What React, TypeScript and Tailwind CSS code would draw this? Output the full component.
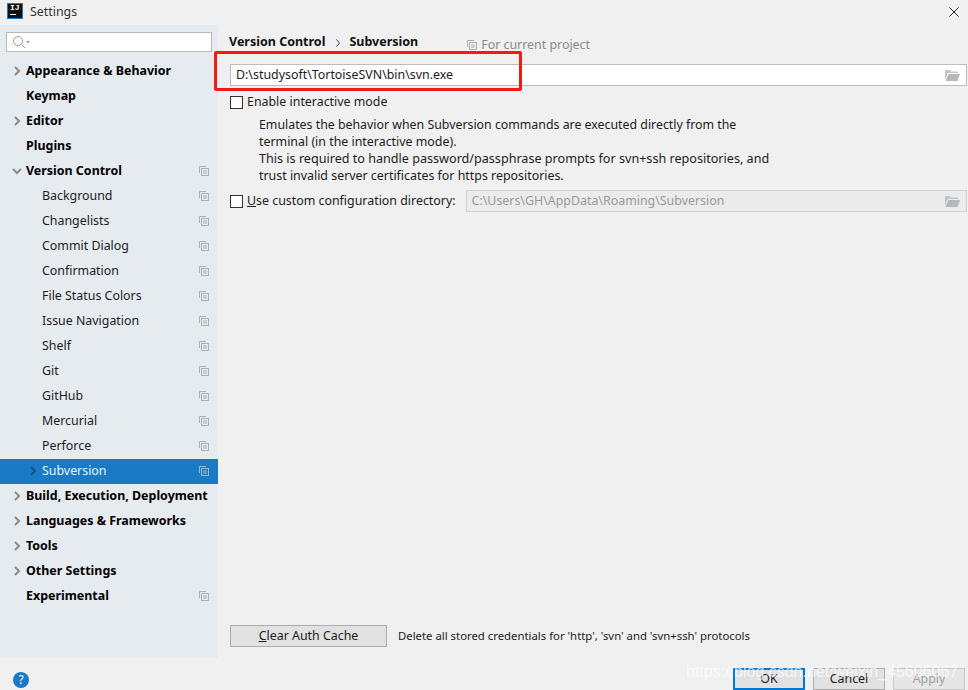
import React from "react";

const font = { fontFamily: '"Noto Sans", "Open Sans", sans-serif' };

function CopyIcon({ color = "#a9b0b6" }: { color?: string }) {
  return (
    <svg width="10" height="10" viewBox="0 0 10 10" fill="none" stroke={color} strokeWidth="1">
      <path d="M0.5 7V0.5H7" />
      <rect x="2.5" y="2.5" width="7" height="7" />
      <path d="M4 5h4M4 7h4" />
    </svg>
  );
}

function Chevron({ dir = "right", color = "#8c8c8c" }: { dir?: "right" | "down"; color?: string }) {
  return (
    <svg width="10" height="10" viewBox="0 0 10 10" fill="none" stroke={color} strokeWidth="2">
      {dir === "right" ? <path d="M3 1l4 4-4 4" /> : <path d="M1 3l4 4 4-4" />}
    </svg>
  );
}

function Folder() {
  return (
    <svg width="15" height="11" viewBox="0 0 15 11">
      <path d="M0 0h5l1 1.500h7v1.500H3L0 10z" fill="#c3c7ca" />
      <path d="M3.500 4H15l-2.500 7H0.500z" fill="#b5b9bc" />
    </svg>
  );
}

type Row = { label: string; bold?: boolean; arrow?: "right" | "down"; copy?: boolean; child?: boolean; selected?: boolean };

const rows: Row[] = [
  { label: "Appearance & Behavior", bold: true, arrow: "right" },
  { label: "Keymap", bold: true },
  { label: "Editor", bold: true, arrow: "right" },
  { label: "Plugins", bold: true },
  { label: "Version Control", bold: true, arrow: "down", copy: true },
  { label: "Background", child: true, copy: true },
  { label: "Changelists", child: true, copy: true },
  { label: "Commit Dialog", child: true, copy: true },
  { label: "Confirmation", child: true, copy: true },
  { label: "File Status Colors", child: true, copy: true },
  { label: "Issue Navigation", child: true, copy: true },
  { label: "Shelf", child: true, copy: true },
  { label: "Git", child: true, copy: true },
  { label: "GitHub", child: true, copy: true },
  { label: "Mercurial", child: true, copy: true },
  { label: "Perforce", child: true, copy: true },
  { label: "Subversion", child: true, copy: true, selected: true, arrow: "right" },
  { label: "Build, Execution, Deployment", bold: true, arrow: "right" },
  { label: "Languages & Frameworks", bold: true, arrow: "right" },
  { label: "Tools", bold: true, arrow: "right" },
  { label: "Other Settings", bold: true, arrow: "right" },
  { label: "Experimental", bold: true, copy: true },
];

function TreeRow({ r }: { r: Row }) {
  return (
    <div className={`relative flex h-[25px] items-center ${r.selected ? "bg-[#1a7bc4] text-[#e8f2fa]" : "text-[#1c1c1c]"}`}>
      {r.arrow && (
        <span className={`absolute top-[7px] ${r.child ? "left-[28px]" : "left-[12px]"}`}>
          <Chevron dir={r.arrow} color={r.selected ? "#0f558c" : "#8c8c8c"} />
        </span>
      )}
      <span className={`whitespace-nowrap ${r.child ? "ml-[42px]" : "ml-[26px]"} ${r.bold ? "font-bold text-black text-[12.45px]" : "text-[12.4px]"}`}>
        {r.label}
      </span>
      {r.copy && (
        <span className="absolute left-[199px] top-[7px] flex">
          <CopyIcon color={r.selected ? "#8fbfe2" : "#a9b0b6"} />
        </span>
      )}
    </div>
  );
}

export default function App() {
  return (
    <div className="relative flex h-[690px] w-[968px] flex-col overflow-hidden bg-[#f0f0f0] text-[12.4px] text-[#1c1c1c]" style={font}>
      <div className="flex h-[25px] shrink-0 items-center pb-[3px]">
        <div className="ml-[7px] flex h-[16px] w-[16px] flex-col border border-[#1a7bc4] bg-[#111] px-[2px] font-mono text-[8px] font-bold leading-[8px] text-white">
          <span>IJ</span>
          <span className="mt-[2px] h-[1px] w-[6px] bg-white" />
        </div>
        <span className="ml-[7px] mt-[3px] text-[12.4px] text-[#333]">Settings</span>
        <svg className="ml-auto mr-[9px] mt-[1px]" width="10" height="10" viewBox="0 0 10 10" stroke="#222" strokeWidth="1" fill="none">
          <path d="M0.500 0.500l9 9M9.500 0.500l-9 9" />
        </svg>
      </div>

      <div className="flex h-[633px] shrink-0">
        <aside className="w-[218px] shrink-0 bg-[#e6ebf0]">
          <div className="mx-[6px] mt-[7px] mb-[7px] flex h-[20px] w-[206px] items-center border border-[#b9b9b9] bg-white pl-[5px]">
            <svg width="18" height="14" viewBox="0 0 18 14" fill="none" stroke="#9a9a9a" strokeWidth="1">
              <circle cx="6" cy="6" r="4.500" />
              <path d="M9.500 9.500L13 13" />
              <path d="M14 6h4l-2 2.500z" fill="#9a9a9a" stroke="none" />
            </svg>
          </div>
          {rows.map((r) => (
            <TreeRow key={r.label} r={r} />
          ))}
        </aside>

        <main className="flex flex-1 flex-col pl-[12px] pr-[1px]">
          <div className="flex h-[39px] items-start pt-[8px]">
            <span className="ml-[-1px] font-bold text-[12.5px] text-[#111]">Version Control</span>
            <svg className="ml-[10px] mt-[6px]" width="6" height="8" viewBox="0 0 6 8" fill="none" stroke="#444" strokeWidth="1">
              <path d="M1.500 0.500l3 3.500-3 3.500" />
            </svg>
            <span className="ml-[8px] font-bold text-[12.5px] text-[#111]">Subversion</span>
            <span className="ml-[49px] mt-[3px] flex items-center gap-[4px] text-[#8a8a8a]">
              <CopyIcon />
              For current project
            </span>
          </div>

          <div className="flex h-[22px] items-center justify-between border border-[#bdbdbd] bg-white pl-[5px] pr-[6px]">
            <span className="text-[#1c1c1c]">D:\studysoft\TortoiseSVN\bin\svn.exe</span>
            <Folder />
          </div>

          <label className="mt-[8px] flex h-[16px] items-center">
            <span className="h-[13px] w-[13px] border border-[#333] bg-white" />
            <span className="ml-[4px]">Enable interactive mode</span>
          </label>

          <div className="mt-[6px] ml-[29px] whitespace-nowrap leading-[17px]">
            <div className="text-[12.35px]">Emulates the behavior when Subversion commands are executed directly from the</div>
            <div>terminal (in the interactive mode).</div>
            <div className="text-[12.6px]">This is required to handle password/passphrase prompts for svn+ssh repositories, and</div>
            <div>trust invalid server certificates for https repositories.</div>
          </div>

          <div className="mt-[6px] flex h-[22px] items-center">
            <span className="h-[13px] w-[13px] shrink-0 border border-[#333] bg-white" />
            <span className="ml-[4px] shrink-0 whitespace-nowrap">
              <span className="underline">U</span>se custom configuration directory:
            </span>
            <div className="ml-[10px] flex h-[22px] flex-1 items-center justify-between border border-[#d2d2d2] bg-[#ebebeb] pl-[5px] pr-[6px] text-[#9a9a9a]">
              <span>C:\Users\GH\AppData\Roaming\Subversion</span>
              <Folder />
            </div>
          </div>

          <div className="mt-auto mb-[11px] flex h-[22px] items-center">
            <button className="h-[22px] w-[157px] border border-[#adadad] bg-[#e1e1e1] text-[12.4px]">
              <span className="underline">C</span>lear Auth Cache
            </button>
            <span className="ml-[11px] whitespace-nowrap text-[11.35px]">Delete all stored credentials for 'http', 'svn' and 'svn+ssh' protocols</span>
          </div>
        </main>
      </div>

      <div className="flex flex-1 items-end pb-[2px] pl-[13px] pr-[3px]">
        <span className="flex h-[16px] w-[16px] items-center justify-center rounded-full bg-[#1a7bc4] text-[12px] text-white">?</span>
        <div className="ml-auto mb-[-2px] flex gap-[8px]">
          <button className="h-[22px] w-[72px] border-2 border-[#0078d7] bg-[#e1e1e1]">OK</button>
          <button className="h-[22px] w-[72px] border border-[#adadad] bg-[#e1e1e1]">Cancel</button>
          <button className="h-[22px] w-[72px] border border-[#c8c8c8] bg-[#e6e6e6] text-[#a0a0a0]">Apply</button>
        </div>
      </div>

      <div className="pointer-events-none absolute left-[214px] top-[51px] h-[40px] w-[308px] rounded-[2px] border-[3px] border-[#f01c14]" />
      <div className="pointer-events-none absolute left-[686px] top-[662px] whitespace-nowrap text-[16px] leading-[20px] text-white/70" style={{ fontFamily: '"Liberation Sans", sans-serif' }}>
        https://blog.csdn.net/weixin_45606067
      </div>
    </div>
  );
}
